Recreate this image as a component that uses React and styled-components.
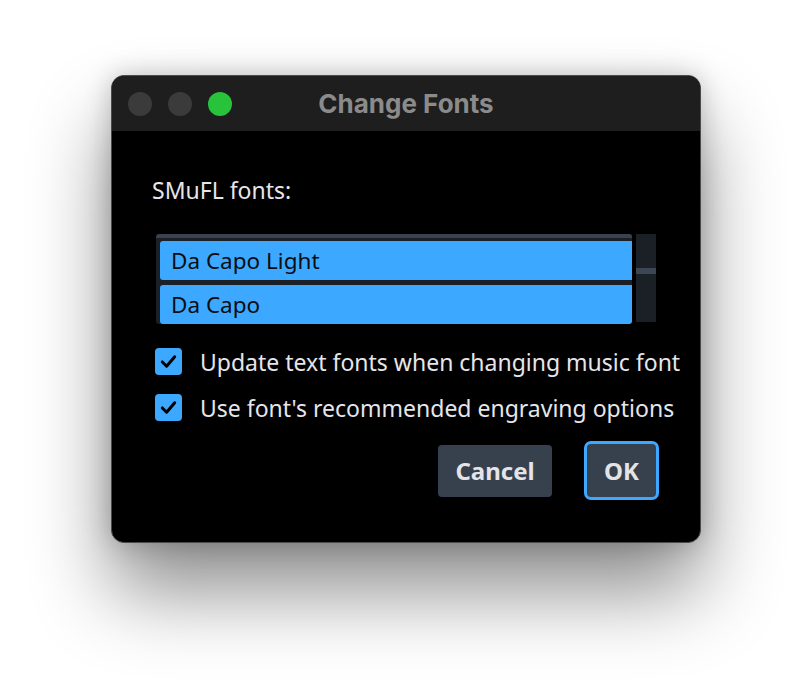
import React from 'react';
import styled, { createGlobalStyle } from 'styled-components';

const GlobalStyle = createGlobalStyle`
  html, body {
    margin: 0;
    padding: 0;
    background: #ffffff;
  }
  body {
    font-family: "Noto Sans", "Open Sans", sans-serif;
  }
`;

const Stage = styled.div`
  width: 812px;
  height: 690px;
  padding: 75px 0 0 111px;
  box-sizing: border-box;
  overflow: hidden;
`;

const Window = styled.div`
  width: 590px;
  height: 468px;
  box-sizing: border-box;
  border: 1px solid #4b4b4b;
  border-radius: 13px;
  background: #000;
  overflow: hidden;
  display: flex;
  flex-direction: column;
  box-shadow: 0 48px 80px rgba(0, 0, 0, 0.45), 0 0 26px rgba(0, 0, 0, 0.22);
`;

const TitleBar = styled.div`
  height: 55px;
  flex-shrink: 0;
  background: #1e1e1e;
  display: grid;
  grid-template-columns: 1fr auto 1fr;
  align-items: center;
`;

const Lights = styled.div`
  display: flex;
  gap: 16px;
  padding-left: 16px;
`;

const Light = styled.span`
  width: 24px;
  height: 24px;
  border-radius: 50%;
  background: ${(props) => props.color};
`;

const Title = styled.div`
  font-family: "Inter", "Liberation Sans", sans-serif;
  font-weight: 700;
  font-size: 26px;
  line-height: 30px;
  color: #8b8b8b;
`;

const Content = styled.div`
  flex: 1;
  display: flex;
  flex-direction: column;
  padding: 45px 40px 0 40px;
`;

const Label = styled.div`
  font-size: 23px;
  line-height: 28px;
  color: #e6e6ea;
`;

const ListFrame = styled.div`
  display: flex;
  margin: 30px 0 0 4px;
  height: 90px;
`;

const ListBody = styled.div`
  width: 476px;
  height: 90px;
  box-sizing: border-box;
  background: #1b1f26;
  border-radius: 3px;
  padding: 0 0 2px 4px;
  display: flex;
  flex-direction: column;
  gap: 5px;
  overflow: hidden;
`;

const HiddenRow = styled.div`
  height: 4px;
  flex-shrink: 0;
  background: #39424e;
  margin: 0 0 -2px -4px;
  border-radius: 3px 0 0 0;
`;

const Row = styled.div`
  height: 39px;
  flex-shrink: 0;
  background: #3da8ff;
  border-radius: 3px 0 0 3px;
  display: flex;
  align-items: center;
  padding-left: 11px;
  font-size: 22.5px;
  color: #0b0d10;
`;

const Scrollbar = styled.div`
  width: 20px;
  height: 88px;
  margin-left: 4px;
  background: #1b1f26;
  padding-top: 34px;
  box-sizing: border-box;
`;

const Thumb = styled.div`
  height: 6px;
  background: #3d4753;
`;

const Options = styled.div`
  display: flex;
  flex-direction: column;
  gap: 19px;
  margin: 24px 0 0 3px;
`;

const CheckRow = styled.label`
  display: flex;
  align-items: center;
  gap: 18px;
  font-size: 23px;
  color: #e6e6ea;
  height: 27px;
  white-space: nowrap;
`;

const Box = styled.span`
  width: 27px;
  height: 27px;
  border-radius: 4px;
  background: #3da8ff;
  display: flex;
  align-items: center;
  justify-content: center;
  flex-shrink: 0;
`;

const Buttons = styled.div`
  display: flex;
  justify-content: flex-end;
  align-items: center;
  gap: 32px;
  margin-top: 20px;
  padding-right: 1px;
`;

const Button = styled.button`
  font-family: "Noto Sans", "Open Sans", sans-serif;
  font-weight: 700;
  font-size: 24px;
  color: #e4e4e8;
  background: #37414d;
  border: ${(props) => (props.primary ? '3px solid #3da8ff' : 'none')};
  border-radius: ${(props) => (props.primary ? '7px' : '4px')};
  height: ${(props) => (props.primary ? '59px' : '52px')};
  width: ${(props) => (props.primary ? '75px' : '114px')};
  padding: 0;
  display: flex;
  align-items: center;
  justify-content: center;
`;

function Check({ children }) {
  return (
    <CheckRow>
      <Box>
        <svg width="19" height="19" viewBox="0 0 20 20">
          <path d="M3.5 10.5 L8 15 L16.5 5" fill="none" stroke="#000" strokeWidth="3.2" strokeLinecap="round" strokeLinejoin="round" />
        </svg>
      </Box>
      {children}
    </CheckRow>
  );
}

export default function App() {
  return (
    <Stage>
      <GlobalStyle />
      <Window>
        <TitleBar>
          <Lights>
            <Light color="#3b3b3b" />
            <Light color="#3b3b3b" />
            <Light color="#28c33b" />
          </Lights>
          <Title>Change Fonts</Title>
          <div />
        </TitleBar>
        <Content>
          <Label>SMuFL fonts:</Label>
          <ListFrame>
            <ListBody>
              <HiddenRow />
              <Row>Da Capo Light</Row>
              <Row>Da Capo</Row>
            </ListBody>
            <Scrollbar>
              <Thumb />
            </Scrollbar>
          </ListFrame>
          <Options>
            <Check>Update text fonts when changing music font</Check>
            <Check>Use font's recommended engraving options</Check>
          </Options>
          <Buttons>
            <Button>Cancel</Button>
            <Button primary>OK</Button>
          </Buttons>
        </Content>
      </Window>
    </Stage>
  );
}
